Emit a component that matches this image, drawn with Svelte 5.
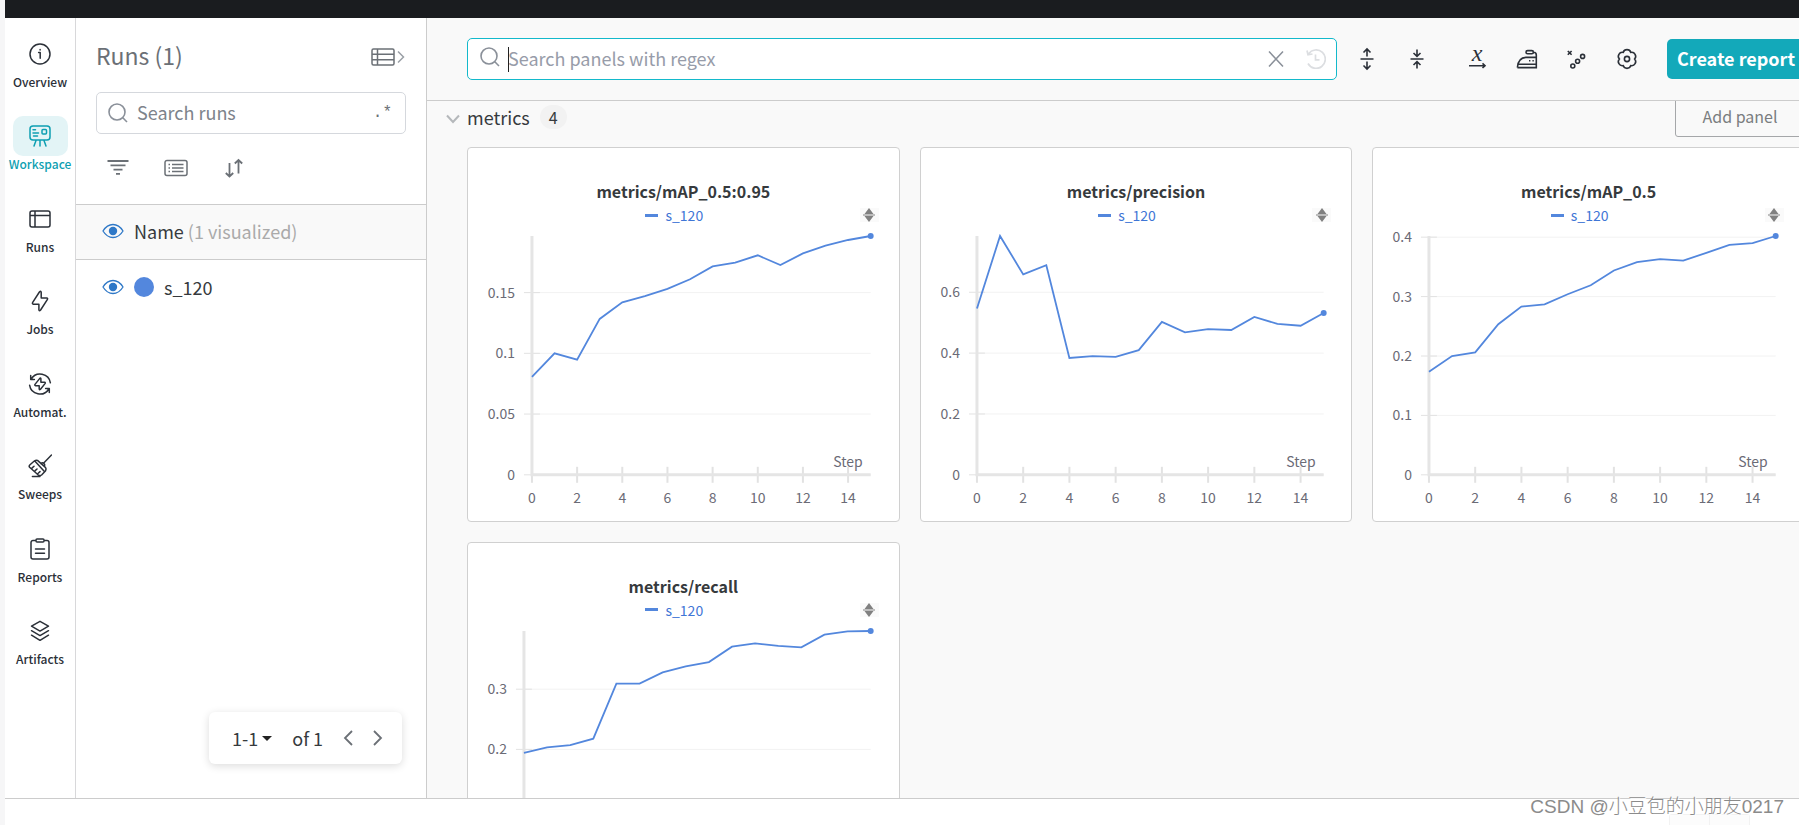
<!-- App.svelte – workspace page: navigation, run list and metric panels -->
<script lang="ts">
  type Chart = {
    title: string;
    axis: number;
    max: number;
    ticks: number[];
    values: number[];
  };

  const nav = [
    { label: 'Overview', d: 'M12 2a10 10 0 1 0 0 20a10 10 0 1 0 0-20M10.6 10.6H12.2V16.2M12.1 7.4v.6' },
    {
      label: 'Workspace',
      d: 'M5 2H19a3 3 0 0 1 3 3V13a3 3 0 0 1-3 3H5a3 3 0 0 1-3-3V5a3 3 0 0 1 3-3ZM5 5.8H7.5M5 9H10.5M5.5 12H9.5M15 5.5H17.5a1 1 0 0 1 1 1V9a1 1 0 0 1-1 1H15a1 1 0 0 1-1-1V6.5a1 1 0 0 1 1-1ZM12 16V22M8.2 16L6 22M15.8 16L18 22'
    },
    { label: 'Runs', d: 'M4 4H20a2 2 0 0 1 2 2V18a2 2 0 0 1-2 2H4a2 2 0 0 1-2-2V6a2 2 0 0 1 2-2ZM7 4V20M2 8.4H22' },
    { label: 'Jobs', d: 'M13.2 3.2V8.9H18.6Q20.2 9.2 19.3 10.6L12.6 21Q11.2 22.6 10.9 20.8V15.2H5.4Q3.8 14.8 4.7 13.4L11.4 3Q12.8 1.6 13.2 3.2Z' },
    {
      label: 'Automat.',
      d: 'M3.2 7A10.4 10.4 0 0 1 22.4 10.8M20.8 17A10.4 10.4 0 0 1 1.6 13.2M2.7 3.4V7.4H6.4M21.3 20.6V16.6H17.6M12.9 6.6V10.3H16.6Q17.7 10.6 17 11.6L12.5 17.2Q11.4 18.2 11.2 17V13.7H7.6Q6.4 13.4 7 12.4L11.6 6.6Q12.6 5.6 12.9 6.6Z'
    },
    {
      label: 'Sweeps',
      d: 'M15.5 9.2L23.5 1M9.5 6.4Q8 5.800 6.600 6.800L2 10.800Q.6 12 1.600 13.200L10 20.800Q12 22.300 13.600 21L17.400 17Q18.600 15 17.400 13.400ZM6.800 7L16.400 17.600M13 9.600Q14.600 8 16 9.600T16.200 12M4.200 13.900L6 12.300M7.200 16.600L9 15M10.200 19.200L12 17.600M4.400 22.600H12'
    },
    {
      label: 'Reports',
      d: 'M8 3.5H5a2 2 0 0 0-2 2V20a2 2 0 0 0 2 2H19a2 2 0 0 0 2-2V5.5a2 2 0 0 0-2-2H16M9 2H15a1 1 0 0 1 1 1V4a1 1 0 0 1-1 1H9a1 1 0 0 1-1-1V3a1 1 0 0 1 1-1ZM7.5 12H16.5M7.5 16.2H16.5'
    },
    { label: 'Artifacts', d: 'M12 2.3L20.5 7.2L12 12.1L3.5 7.2ZM3.5 11.7L12 16.6L20.5 11.7M3.5 16.2L12 21.3L20.5 16.2' }
  ];

  const charts: Chart[] = [
    {
      title: 'metrics/mAP_0.5:0.95',
      axis: 64,
      max: 0.1966,
      ticks: [0, 0.05, 0.1, 0.15],
      values: [0.0805, 0.1, 0.0948, 0.1283, 0.142, 0.1472, 0.153, 0.161, 0.1716, 0.1747, 0.1807, 0.1727, 0.1823, 0.1886, 0.1933, 0.1966]
    },
    {
      title: 'metrics/precision',
      axis: 56,
      max: 0.785,
      ticks: [0, 0.2, 0.4, 0.6],
      values: [0.547, 0.785, 0.659, 0.689, 0.384, 0.39, 0.388, 0.41, 0.503, 0.468, 0.479, 0.476, 0.519, 0.496, 0.49, 0.532]
    },
    {
      title: 'metrics/mAP_0.5',
      axis: 56,
      max: 0.402,
      ticks: [0, 0.1, 0.2, 0.3, 0.4],
      values: [0.1736, 0.2, 0.206, 0.2534, 0.283, 0.287, 0.304, 0.319, 0.344, 0.358, 0.363, 0.3607, 0.3736, 0.387, 0.39, 0.402]
    },
    {
      title: 'metrics/recall',
      axis: 56,
      max: 0.3967,
      ticks: [0, 0.1, 0.2, 0.3],
      values: [0.1944, 0.2033, 0.2072, 0.2178, 0.3094, 0.3094, 0.3278, 0.3378, 0.345, 0.3706, 0.3761, 0.372, 0.3694, 0.3906, 0.396, 0.3967]
    }
  ];

  const steps = [0, 2, 4, 6, 8, 10, 12, 14];
  const TOP = 8;
  const BASE = 247;
  const RIGHT = 403;

  let runQuery = $state('');
  let panelQuery = $state('');
  let open = $state(true);

  const px = (c: Chart, i: number) => c.axis + ((RIGHT - c.axis) * i) / 15;
  const py = (c: Chart, v: number) => BASE - ((BASE - TOP) * v) / c.max;
  const line = (c: Chart) => c.values.map((v, i) => `${px(c, i).toFixed(1)},${py(c, v).toFixed(1)}`).join(' ');
</script>

{#snippet eye()}
  <svg class="eye" viewBox="0 0 22 16" width="22" height="16">
    <path d="M1 8Q5 1.5 11 1.5T21 8Q17 14.5 11 14.5T1 8Z" fill="none" stroke="#2e78c7" stroke-width="1.3" />
    <circle cx="11" cy="8" r="4.2" fill="#2e78c7" />
  </svg>
{/snippet}

{#snippet lens()}
  <svg class="lens" viewBox="0 0 20 20" width="20" height="20">
    <circle cx="9" cy="9" r="8" />
    <path d="M14.8 14.8L19 19" />
  </svg>
{/snippet}

<div class="shell">
  <div class="topbar"></div>

  <div class="body">
    <nav class="nav">
      {#each nav as item (item.label)}
        <a class="nav-item" class:active={item.label === 'Workspace'} href="#{item.label.toLowerCase()}">
          <span class="nav-icon">
            <svg viewBox="0 0 24 24" width="24" height="24"><path d={item.d} /></svg>
          </span>
          <span class="nav-label">{item.label}</span>
        </a>
      {/each}
    </nav>

    <aside class="runs">
      <header class="runs-head">
        <h1>Runs (1)</h1>
        <button class="plain" aria-label="Expand table">
          <svg class="line-icon" viewBox="0 0 34 18" width="34" height="18">
            <path d="M2.5 1H21.5a1.5 1.5 0 0 1 1.5 1.5V15.5a1.5 1.5 0 0 1-1.5 1.5H2.5a1.5 1.5 0 0 1-1.5-1.5V2.5a1.5 1.5 0 0 1 1.5-1.5ZM1 6.3H23M1 11.7H23M6.5 1V17" />
            <path class="faint" d="M27 3.5L32.5 9L27 14.5" />
          </svg>
        </button>
      </header>

      <div class="run-search">
        {@render lens()}
        <input aria-label="Search runs" placeholder="Search runs" bind:value={runQuery} />
        <button class="plain regex" aria-label="Toggle regex">.*</button>
      </div>

      <div class="run-tools">
        <button class="plain" aria-label="Filter">
          <svg class="line-icon thick" viewBox="0 0 24 20" width="24" height="20"><path d="M1.5 3H22.5M4.5 7.3H19.5M7.5 11.6H16.5M10 15.9H14" /></svg>
        </button>
        <button class="plain" aria-label="Group">
          <svg class="line-icon" viewBox="0 0 24 20" width="24" height="20">
            <path d="M3 2.5H21a2 2 0 0 1 2 2V15.5a2 2 0 0 1-2 2H3a2 2 0 0 1-2-2V4.5a2 2 0 0 1 2-2ZM4.5 6.5H6M8 6.5H19.5M4.5 10H6M8 10H19.5M4.5 13.5H6M8 13.5H19.5" />
          </svg>
        </button>
        <button class="plain" aria-label="Sort">
          <svg class="line-icon thick" viewBox="0 0 24 20" width="24" height="20"><path d="M7.5 5V18.5M3.8 15L7.5 18.5L11.2 15M16.5 15.5V2M12.8 5.5L16.5 2L20.2 5.5" /></svg>
        </button>
      </div>

      <table class="run-table">
        <thead>
          <tr>
            <th class="eye-cell">{@render eye()}</th>
            <th>Name <span class="muted">(1 visualized)</span></th>
          </tr>
        </thead>
        <tbody>
          <tr>
            <td class="eye-cell">{@render eye()}</td>
            <td><span class="run-name"><span class="dot"></span>s_120</span></td>
          </tr>
        </tbody>
      </table>

      <div class="pager">
        <button class="plain range">1-1<span class="caret-down"></span></button>
        <span>of 1</span>
        <button class="plain" aria-label="Previous page">
          <svg class="line-icon thick" viewBox="0 0 10 16" width="10" height="16"><path d="M9 1L2 8L9 15" /></svg>
        </button>
        <button class="plain" aria-label="Next page">
          <svg class="line-icon thick" viewBox="0 0 10 16" width="10" height="16"><path d="M1 1L8 8L1 15" /></svg>
        </button>
      </div>
    </aside>

    <main class="main">
      <header class="toolbar">
        <div class="panel-search">
          {@render lens()}
          <span class="cursor"></span>
          <input aria-label="Search panels with regex" placeholder="Search panels with regex" bind:value={panelQuery} />
          <button class="plain" aria-label="Clear" onclick={() => (panelQuery = '')}>
            <svg class="line-icon clear" viewBox="0 0 20 20" width="20" height="20"><path d="M3 2.5L17 17.5M17 2.5L3 17.5" /></svg>
          </button>
          <button class="plain" aria-label="History">
            <svg class="line-icon ghost" viewBox="0 0 20 20" width="20" height="20"><path d="M2.5 5A9.2 9.2 0 1 1 2 14.5M1 1.5L2 5.8L6.5 5M9.5 5.5V10.8H13.5" /></svg>
          </button>
        </div>

        <div class="tool-group">
          <button class="tool" aria-label="Expand all">
            <svg viewBox="0 0 24 24" width="24" height="24"><path d="M5.5 12H18.5M12 9.5V2.5M8.5 5.5L12 2L15.5 5.5M12 14.5V21.5M8.5 18.5L12 22L15.5 18.5" /></svg>
          </button>
          <button class="tool" aria-label="Collapse all">
            <svg viewBox="0 0 24 24" width="24" height="24"><path d="M5.5 12H18.5M12 2.5V9M8.5 6L12 9.3L15.5 6M12 21.5V15M8.5 18L12 14.7L15.5 18" /></svg>
          </button>
        </div>
        <div class="tool-group">
          <button class="tool" aria-label="X axis">
            <svg viewBox="0 0 24 24" width="24" height="24">
              <text x="12" y="14" text-anchor="middle">x</text>
              <path d="M4 18.7H20M17.5 16.4L20 18.7L17.5 21" />
            </svg>
          </button>
          <button class="tool" aria-label="Smoothing">
            <svg viewBox="0 0 24 24" width="24" height="24">
              <path d="M2.4 20.6Q3.2 10.6 11 10.4H21.3M2.4 20.6H21.3V8Q21.3 5.2 18.6 5.2M2.8 17.2H21.3M12.6 3.6H16.8a1.6 1.6 0 0 1 0 3.2H12.6a1.6 1.6 0 0 1 0-3.2ZM14 13.7H15.4M17.4 13.7H18.8" />
            </svg>
          </button>
          <button class="tool" aria-label="Outliers">
            <svg viewBox="0 0 24 24" width="24" height="24">
              <path d="M2.8 4L6.6 7.8M6.6 4L2.8 7.8" />
              <circle cx="7.8" cy="19" r="2" /><circle cx="12.6" cy="14.2" r="2" /><circle cx="17.6" cy="9.4" r="2" />
            </svg>
          </button>
          <button class="tool" aria-label="Settings">
            <svg viewBox="0 0 24 24" width="24" height="24">
              <path d="M19.6 12A4 4 0 0 0 15.8 5.4A4 4 0 0 0 8.2 5.4A4 4 0 0 0 4.4 12A4 4 0 0 0 8.2 18.6A4 4 0 0 0 15.8 18.6A4 4 0 0 0 19.6 12Z" />
              <circle cx="12" cy="12" r="2.6" />
            </svg>
          </button>
        </div>
        <button class="create">Create report</button>
      </header>

      <div class="scroll">
        <section class="section">
          <header class="section-head">
            <button class="plain fold" aria-expanded={open} onclick={() => (open = !open)}>
              <svg class="line-icon chevron" viewBox="0 0 14 10" width="14" height="10"><path d="M1 1.5L7 8L13 1.5" /></svg>
              metrics
            </button>
            <span class="count">4</span>
            <button class="add">Add panel</button>
          </header>

          {#if open}
            <div class="grid">
              {#each charts as c (c.title)}
                <article class="card">
                  <h2>{c.title}</h2>
                  <div class="legend-row">
                    <span class="legend"><span class="swatch"></span>s_120</span>
                    <button class="resize" aria-label="Resize legend">
                      <svg viewBox="0 0 12 14" width="12" height="14"><path d="M6 0L10.5 6H1.5ZM6 14L10.5 8H1.5ZM0 6.4H12V7.6H0Z" /></svg>
                    </button>
                  </div>
                  <svg class="plot" viewBox="0 0 431 293">
                    {#each c.ticks as t}
                      <line class="rule" x1={c.axis} x2={RIGHT} y1={py(c, t)} y2={py(c, t)} />
                      <line class="tick" x1={c.axis - 8} x2={c.axis + 8} y1={py(c, t)} y2={py(c, t)} />
                      <text x={c.axis - 17} y={py(c, t) + 5} text-anchor="end">{t}</text>
                    {/each}
                    {#each steps as s}
                      <line class="tick wide" x1={px(c, s)} x2={px(c, s)} y1={BASE - 8} y2={BASE + 8} />
                      <text x={px(c, s)} y={BASE + 28} text-anchor="middle">{s}</text>
                    {/each}
                    <path class="axes" d="M{c.axis} {TOP}V{BASE}H{RIGHT}" />
                    <text x="395" y={BASE - 8} text-anchor="end">Step</text>
                    <polyline points={line(c)} />
                    <circle cx={RIGHT} cy={py(c, c.values[15])} r="3" />
                  </svg>
                </article>
              {/each}
            </div>
          {/if}
        </section>
      </div>
    </main>
  </div>

  <footer class="footer">
    <div class="stub"><span></span><span></span></div>
    <span class="mark">CSDN @小豆包的小朋友0217</span>
  </footer>
</div>

<style>
  :global(body) {
    background: #f6f6f7;
  }

  .shell {
    display: flex;
    flex-direction: column;
    height: 100vh;
    margin-left: 5px;
    overflow: hidden;
    background: #fff;
    color: #363a3d;
    font-family: "Noto Sans CJK SC", "Noto Sans", sans-serif;
    font-size: 18px;
    line-height: 24px;
  }

  .shell :is(button, input) {
    font: inherit;
    color: inherit;
  }

  .shell svg {
    display: block;
    flex-shrink: 0;
  }

  .plain {
    display: flex;
    align-items: center;
    padding: 0;
    border: none;
    background: none;
    cursor: pointer;
  }

  .line-icon,
  .lens {
    fill: none;
    stroke: #6b7076;
    stroke-width: 1.5;
  }

  .lens {
    stroke: #8a9099;
    stroke-width: 1.6;
  }

  .thick {
    stroke-width: 1.8;
  }

  .faint {
    stroke: #9aa0a6;
  }

  .topbar {
    height: 18px;
    flex-shrink: 0;
    background: #1a1c1f;
  }

  .body {
    display: flex;
    flex: 1;
    min-height: 0;
    border-bottom: 1px solid #ccc;
  }

  /* left navigation */
  .nav {
    display: flex;
    flex-direction: column;
    justify-content: space-between;
    width: 70px;
    flex-shrink: 0;
    padding: 16px 0 131px;
    border-right: 1px solid #d8d8da;
  }

  .nav-item {
    display: flex;
    flex-direction: column;
    align-items: center;
    color: #2b3038;
    text-decoration: none;
    font-size: 12px;
    font-weight: 500;
    line-height: 16px;
  }

  .nav-icon {
    display: flex;
    align-items: center;
    justify-content: center;
    width: 55px;
    height: 40px;
    border-radius: 10px;
  }

  .nav-icon svg {
    fill: none;
    stroke: currentColor;
    stroke-width: 1.5;
    stroke-linejoin: round;
    stroke-linecap: round;
  }

  .active {
    color: #0e9fb2;
  }

  .active .nav-icon {
    background: #e3f4f6;
  }

  /* run list */
  .runs {
    display: flex;
    flex-direction: column;
    width: 350px;
    flex-shrink: 0;
    border-right: 1px solid #ccc;
  }

  .runs-head {
    display: flex;
    align-items: center;
    justify-content: space-between;
    height: 30px;
    padding: 24px 21px 0 20px;
  }

  .runs-head h1 {
    margin: 0;
    padding-bottom: 4px;
    font-size: 23px;
    font-weight: 400;
    color: #6b7076;
  }

  .run-search,
  .panel-search {
    display: flex;
    align-items: center;
    height: 40px;
    border: 1px solid #d5d8dd;
    border-radius: 5px;
    background: #fff;
  }

  .run-search {
    gap: 9px;
    margin: 20px 20px 0;
    padding: 0 13px 0 11px;
  }

  .run-search input,
  .panel-search input {
    flex: 1;
    min-width: 0;
    padding: 0 0 2px;
    border: none;
    outline: none;
    background: none;
  }

  .run-search input::placeholder {
    color: #7d838b;
    opacity: 1;
  }

  .run-search .regex {
    font-family: "Liberation Mono", monospace;
    font-size: 16px;
    color: #6b7076;
  }

  .run-tools {
    display: flex;
    gap: 34px;
    padding: 24px 30px 26px;
  }

  .run-table {
    width: 100%;
    border-collapse: collapse;
  }

  .run-table th,
  .run-table td {
    height: 54px;
    padding: 0;
    text-align: left;
    font-weight: 400;
  }

  .run-table th {
    height: 52px;
    padding-bottom: 2px;
    border-top: 1px solid #ccc;
    border-bottom: 1px solid #ccc;
    background: #f9f9f9;
  }

  .run-table .eye-cell {
    width: 32px;
    padding-left: 26px;
  }

  .muted {
    color: #aaa;
  }

  .run-name {
    display: flex;
    align-items: center;
    gap: 10px;
  }

  .dot {
    width: 20px;
    height: 20px;
    border-radius: 50%;
    background: #5387dd;
  }

  .pager {
    display: flex;
    align-items: center;
    gap: 20px;
    align-self: flex-end;
    height: 52px;
    margin: auto 24px 34px;
    padding: 0 19px 0 23px;
    border-radius: 6px;
    box-shadow: 0 2px 8px rgba(0, 0, 0, 0.14);
  }

  .range {
    gap: 4px;
  }

  .caret-down {
    border: 5px solid transparent;
    border-top-color: #222;
    border-bottom: none;
  }

  /* workspace */
  .main {
    display: flex;
    flex-direction: column;
    flex: 1;
    min-width: 0;
    /* the content runs a little past the window edge */
    margin-right: -6px;
    background: #f9f9f9;
  }

  .toolbar {
    display: flex;
    align-items: center;
    gap: 20px;
    height: 82px;
    flex-shrink: 0;
    padding-left: 40px;
    border-bottom: 1px solid #ccc;
  }

  .panel-search {
    position: relative;
    flex: 1;
    gap: 20px;
    margin-right: -10px;
    padding: 0 10px 0 12px;
    border-color: #13b9cb;
  }

  .panel-search .lens {
    margin-bottom: 5px;
  }

  .panel-search input {
    margin-left: -12px;
  }

  .panel-search input::placeholder {
    color: #979ca9;
    opacity: 1;
  }

  .cursor {
    position: absolute;
    left: 40px;
    top: 8px;
    width: 1px;
    height: 25px;
    background: #222;
  }

  .clear {
    stroke: #8a9099;
  }

  .ghost {
    stroke: #dcdee1;
    stroke-width: 1.7;
  }

  .tool-group {
    display: flex;
    gap: 10px;
  }

  .tool {
    display: flex;
    align-items: center;
    justify-content: center;
    width: 40px;
    height: 40px;
    padding: 0;
    border: none;
    background: none;
    cursor: pointer;
  }

  .tool svg {
    fill: none;
    stroke: #2b3038;
    stroke-width: 1.6;
  }

  .tool text {
    fill: #2b3038;
    stroke: none;
    font-family: "Liberation Serif", serif;
    font-size: 24px;
    font-style: italic;
  }

  .toolbar .create {
    width: 138px;
    height: 40px;
    padding: 0 0 2px;
    border: none;
    border-radius: 5px;
    background: #13a9ba;
    font-weight: 700;
    color: #fff;
    white-space: nowrap;
    cursor: pointer;
  }

  .scroll {
    flex: 1;
    min-height: 0;
    overflow: hidden;
  }

  .section-head {
    display: flex;
    align-items: center;
    height: 40px;
    margin: -4px 0 10px;
    padding-left: 19px;
  }

  .fold {
    gap: 7px;
  }

  .chevron {
    margin-top: 4px;
    stroke: #b5b8bb;
    stroke-width: 2;
  }

  .count {
    margin-left: 10px;
    padding: 0 9px;
    border-radius: 12px;
    background: #f2f2f2;
    font-size: 16px;
  }

  .section-head .add {
    width: 130px;
    height: 40px;
    margin-left: auto;
    padding: 0 0 2px;
    border: 1px solid #a5a7a9;
    border-radius: 3px;
    background: none;
    color: #7a7d80;
    font-size: 16px;
    cursor: pointer;
  }

  .grid {
    display: grid;
    grid-template-columns: repeat(3, 1fr);
    gap: 20px;
    padding-left: 40px;
  }

  .card {
    padding-top: 31px;
    border: 1px solid #d0d0d0;
    border-radius: 4px;
    background: #fff;
  }

  .card h2 {
    margin: 0;
    font-size: 16px;
    font-weight: 600;
    text-align: center;
  }

  .legend-row {
    display: flex;
    align-items: center;
    height: 24px;
    padding: 0 20px 0 21px;
    font-size: 14px;
    color: #3f76d6;
  }

  .legend {
    display: flex;
    align-items: center;
    justify-content: center;
    gap: 7px;
    flex: 1;
  }

  .swatch {
    width: 13px;
    height: 3px;
    background: #5387dd;
  }

  .resize {
    display: flex;
    justify-content: center;
    width: 19px;
    padding: 0;
    border: none;
    background: #fafafa;
  }

  .resize path {
    fill: #808080;
  }

  .plot {
    width: 100%;
    margin-top: 1px;
    font-size: 14px;
    fill: #6b6b76;
  }

  .rule {
    stroke: #f2f2f2;
  }

  .tick {
    stroke: #e2e2e2;
  }

  .wide {
    stroke-width: 2;
  }

  .axes {
    fill: none;
    stroke: #e5e5e5;
    stroke-width: 3;
  }

  .plot polyline {
    fill: none;
    stroke: #5387dd;
    stroke-width: 1.8;
  }

  .plot circle {
    fill: #5387dd;
  }

  .footer {
    display: flex;
    align-items: flex-end;
    justify-content: flex-end;
    position: relative;
    height: 26px;
    flex-shrink: 0;
    padding-right: 49px;
    background: #fff;
  }

  .stub {
    display: flex;
    border: 1px solid #f2f2f2;
    border-bottom: none;
    border-radius: 3px 3px 0 0;
  }

  .stub span {
    width: 39px;
    height: 10px;
    background: #fcfcfc;
  }

  .stub span + span {
    border-left: 1px solid #f2f2f2;
  }

  .mark {
    position: absolute;
    right: 15px;
    bottom: 6px;
    font-family: "Liberation Sans", "Noto Sans CJK SC", sans-serif;
    font-size: 19px;
    font-weight: 300;
    color: #8b8b8b;
    text-shadow: 1px 1px 0 #fff;
    white-space: nowrap;
  }
</style>
